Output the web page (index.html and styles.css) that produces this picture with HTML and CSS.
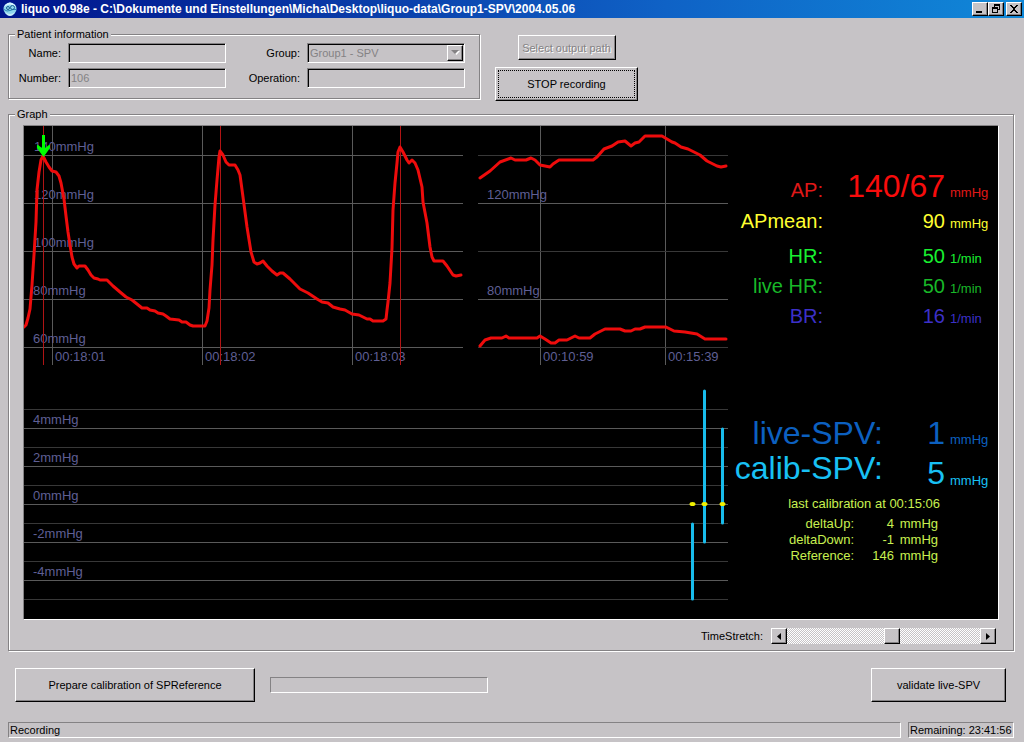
FILE: index.html
```html
<!DOCTYPE html>
<html lang="en">
<head>
<meta charset="utf-8">
<title>liquo v0.98e</title>
<link rel="stylesheet" href="styles.css">
</head>
<body class="window">
<header class="titlebar">
  <svg class="app-icon" width="16" height="16" viewBox="0 0 16 16" aria-hidden="true">
    <circle cx="8" cy="8" r="6.5" fill="#8fd6ee"/>
    <path d="M2 6Q8 1 14 6L13 4Q8-1 3 4Z" fill="#d8f4ff"/>
    <path d="M3 11Q8 15 13 11L11 14Q8 16 5 14Z" fill="#c8ecfa"/>
    <path d="M2 8.500Q5 11 8 9.500T14 8.500" fill="none" stroke="#2b86b4"/>
    <circle cx="6" cy="7" r="1.500" fill="none" stroke="#1c5f94"/>
    <circle cx="10.500" cy="6.500" r="2" fill="none" stroke="#1c5f94"/>
  </svg>
  <h1 class="title">liquo v0.98e - C:\Dokumente und Einstellungen\Micha\Desktop\liquo-data\Group1-SPV\2004.05.06</h1>
  <div class="window-buttons">
    <button class="win-btn" type="button" aria-label="Minimize"><svg width="12" height="10" viewBox="0 0 12 10" shape-rendering="crispEdges"><path d="M2 7h6v2H2z"/></svg></button>
    <button class="win-btn" type="button" aria-label="Restore"><svg width="12" height="10" viewBox="0 0 12 10" shape-rendering="crispEdges"><path d="M4 0h6v6H8V5h1V2H5v1H4zM2 3h6v6H2zM3 5v3h4V5z" fill-rule="evenodd"/></svg></button>
    <button class="win-btn close" type="button" aria-label="Close"><svg width="12" height="10" viewBox="0 0 12 10" shape-rendering="crispEdges"><path d="M2 1h2v1h1v1h2V2h1V1h2v1H9v1H8v1H7v2h1v1h1v1h1v1H8V8H7V7H5v1H4v1H2V8h1V7h1V6h1V4H4V3H3V2H2z"/></svg></button>
  </div>
</header>

<main class="content">
  <div class="top">
    <fieldset class="group patient">
      <legend>Patient information</legend>
      <div class="fields">
        <label for="name">Name:</label>
        <input class="field" id="name" type="text" disabled>
        <label for="group">Group:</label>
        <div class="combo">
          <select class="field" id="group" disabled><option>Group1 - SPV</option></select>
          <span class="combo-arrow"><svg width="9" height="6" viewBox="0 0 9 6"><path d="M2 1h7L5.500 5z" fill="#fff"/><path d="M0 0h8L4 4z" fill="#848284"/></svg></span>
        </div>
        <label for="number">Number:</label>
        <input class="field" id="number" type="text" value="106" disabled>
        <label for="operation">Operation:</label>
        <input class="field" id="operation" type="text" disabled>
      </div>
    </fieldset>
    <div class="actions">
      <button class="btn select-path" type="button" disabled>Select output path</button>
      <button class="btn stop" type="button">STOP recording</button>
    </div>
  </div>

  <fieldset class="group graph">
    <legend>Graph</legend>
    <div class="monitor">
      <svg class="plots" viewBox="24 126 704 493" role="img" aria-label="Pressure curves">
        <g class="grid">
          <path d="M24 155.500H463M24 203.500H463M24 251.500H463M24 299.500H463M24 347.500H463"/>
          <path d="M52.500 126V365M202.500 126V365M352.500 126V365M540.500 126V365M665.500 126V365"/>
          <path d="M478 203.500H728M478 299.500H728"/>
          <path d="M24 428.500H728M24 466.500H728M24 504.500H728M24 542.500H728M24 580.500H728"/>
          <path class="minor" d="M478 155.500H728M478 251.500H728M478 347.500H728"/>
          <path class="minor" d="M24 409.500H728M24 447.500H728M24 485.500H728M24 523.500H728M24 561.500H728M24 599.500H728"/>
        </g>
        <g class="axis">
          <text x="34" y="151">140mmHg</text>
          <text x="34" y="199">120mmHg</text>
          <text x="34" y="247">100mmHg</text>
          <text x="33" y="295">80mmHg</text>
          <text x="33" y="343">60mmHg</text>
          <text x="55" y="361">00:18:01</text>
          <text x="205" y="361">00:18:02</text>
          <text x="355" y="361">00:18:03</text>
          <text x="487" y="199">120mmHg</text>
          <text x="487" y="295">80mmHg</text>
          <text x="543" y="361">00:10:59</text>
          <text x="668" y="361">00:15:39</text>
          <text x="33" y="424">4mmHg</text>
          <text x="33" y="462">2mmHg</text>
          <text x="33" y="500">0mmHg</text>
          <text x="33" y="538">-2mmHg</text>
          <text x="33" y="576">-4mmHg</text>
        </g>
        <g class="beat">
          <rect x="43" y="126" width="1" height="239"/>
          <rect x="220" y="126" width="1" height="239"/>
          <rect x="400" y="126" width="1" height="239"/>
        </g>
        <polyline class="trace" points="24,327 26,325 28,318 30,309 32,285 34,255 36,222 37,190 39,172 41,160 43,156 46,162 49,167 52,171 56,172 59,176 61,183 64,199 66,216 68,232 70,245 72,257 74,264 77,268 79,266 85,266 88,270 91,275 94,278 98,279 100,280 107,280 113,286 120,292 126,297 132,300 137,304 142,308 147,308 150,310 155,311 158,313 163,314 166,316 170,319 179,320 182,322 186,322 190,325 193,326 205,326 207,321 209,308 210,290 212,265 213,240 215,205 217,180 219,157 220,151 223,155 226,162 229,165 235,165 238,170 240,175 243,197 247,227 251,252 254,262 257,264 260,263 263,261 267,266 272,271 277,275 280,273 283,273 290,279 300,289 308,293 317,299 322,302 328,303 333,307 340,309 345,310 352,314 359,315 367,319 370,319 373,321 383,321 386,319 387,310 388,302 390,283 392,248 393,210 395,183 397,163 398,152 400,147 403,152 407,160 409,163 412,160 415,163 418,170 422,187 423,202 427,223 430,247 432,257 434,261 443,261 447,266 453,275 456,276 461,275"/>
        <polyline class="trace" points="480,178 490,171 500,162 511,158 515,160 526,160 531,158 535,160 540,165 550,167 553,164 559,160 593,160 597,157 604,149 612,146 618,142 625,141 631,146 635,143 639,142 645,136 662,136 667,139 672,142 675,143 681,147 688,149 700,155 707,161 717,166 721,167 726,166"/>
        <polyline class="trace" points="480,346 485,340 491,338 502,338 506,336 509,338 537,338 540,336 545,339 551,343 555,343 559,340 567,340 575,336 579,338 590,338 595,334 605,329 620,329 625,331 631,331 635,329 640,329 645,327 666,327 674,331 685,332 697,334 705,339 726,339"/>
        <path class="marker" d="M42 135h3v13l4-3h1v3l-6.500 9-6.500-9v-3h1l4 3z"/>
        <path class="range-bars" d="M692.500 524V599M704.500 391V542M722.500 429V523"/>
        <g class="points"><ellipse cx="692.500" cy="504" rx="3" ry="2"/><ellipse cx="704.500" cy="504" rx="3" ry="2"/><ellipse cx="722.500" cy="504" rx="3" ry="2"/></g>
      </svg>
      <div class="readouts">
        <dl class="vitals">
          <div class="row ap"><dt>AP:</dt><dd class="value large">140/67</dd><dd class="unit">mmHg</dd></div>
          <div class="row apmean"><dt>APmean:</dt><dd class="value">90</dd><dd class="unit">mmHg</dd></div>
          <div class="row hr"><dt>HR:</dt><dd class="value">50</dd><dd class="unit">1/min</dd></div>
          <div class="row live-hr"><dt>live HR:</dt><dd class="value">50</dd><dd class="unit">1/min</dd></div>
          <div class="row br"><dt>BR:</dt><dd class="value">16</dd><dd class="unit">1/min</dd></div>
        </dl>
        <dl class="spv">
          <div class="row live-spv"><dt>live-SPV:</dt><dd class="value large">1</dd><dd class="unit">mmHg</dd></div>
          <div class="row calib-spv"><dt>calib-SPV:</dt><dd class="value large">5</dd><dd class="unit">mmHg</dd></div>
        </dl>
        <p class="calibrated">last calibration at 00:15:06</p>
        <table class="calibration">
          <tr><th scope="row">deltaUp:</th><td>4</td><td class="cal-unit">mmHg</td></tr>
          <tr><th scope="row">deltaDown:</th><td>-1</td><td class="cal-unit">mmHg</td></tr>
          <tr><th scope="row">Reference:</th><td>146</td><td class="cal-unit">mmHg</td></tr>
        </table>
      </div>
    </div>
    <div class="stretch">
      <label for="stretch">TimeStretch:</label>
      <div class="scrollbar">
        <button class="scroll-btn" type="button" aria-label="Decrease"><svg width="4" height="7" viewBox="0 0 4 7"><path d="M4 0v7L0 3.500z"/></svg></button>
        <input class="scroll-range" id="stretch" type="range" min="0" max="100" value="55">
        <button class="scroll-btn" type="button" aria-label="Increase"><svg width="4" height="7" viewBox="0 0 4 7"><path d="M0 0v7l4-3.500z"/></svg></button>
      </div>
    </div>
  </fieldset>

  <div class="bottom">
    <button class="btn prepare" type="button">Prepare calibration of SPReference</button>
    <div class="progress" role="progressbar" aria-label="Calibration progress" aria-valuenow="0"></div>
    <button class="btn validate" type="button">validate live-SPV</button>
  </div>
</main>

<footer class="statusbar">
  <div class="status-main">Recording</div>
  <div class="status-time">Remaining: 23:41:56</div>
</footer>
</body>
</html>
```
FILE: styles.css
```css
* { box-sizing: border-box; }

.window {
  --face: #c6c3c6;
  --shade: #848284;
  margin: 0;
  min-height: 100vh;
  display: flex;
  flex-direction: column;
  background: var(--face);
  color: #000;
  font: 11px/16px "Liberation Sans", Arial, sans-serif;
}

button, input, select { font: inherit; color: inherit; margin: 0; border-radius: 0; }

.titlebar {
  display: flex;
  align-items: center;
  height: 18px;
  padding: 0 2px;
  gap: 3px;
  background: linear-gradient(90deg, #00148c, #0a3ca8 35%, #0f62c6 65%, #1088d8);
  color: #fff;
}
.app-icon { flex: none; }
.title {
  flex: 1;
  min-width: 0;
  margin: 0;
  overflow: hidden;
  white-space: nowrap;
  font-size: 12px;
  line-height: 18px;
  font-weight: bold;
}
.window-buttons { display: flex; }
.win-btn, .scroll-btn, .combo-arrow {
  display: flex;
  align-items: center;
  justify-content: center;
  padding: 0;
  width: 16px;
  background: var(--face);
  border: 1px solid;
  border-color: #fff #000 #000 #fff;
  box-shadow: inset -1px -1px 0 var(--shade);
  color: #000;
}
.win-btn { height: 14px; }
.close { margin-left: 2px; }

.content { padding: 9px 10px 0 8px; }

.top { display: flex; gap: 15px; }
.group {
  min-width: 0;
  margin: 0;
  border: 1px solid var(--shade);
  box-shadow: inset 1px 1px 0 #fff, 1px 1px 0 #fff;
}
.group legend { margin: 0; padding: 0 2px; background: var(--face); line-height: 14px; }
.patient { flex: 0 1 472px; height: 72px; padding: 2px 14px 0 6px; }
.fields {
  display: grid;
  grid-template-columns: 46px 158px 1fr 158px;
  gap: 5px 7px;
  align-items: center;
}
.fields label { text-align: right; }
.field {
  display: block;
  width: 100%;
  height: 20px;
  padding: 0 2px;
  background: var(--face);
  border: 1px solid;
  border-color: var(--shade) #fff #fff var(--shade);
  box-shadow: inset 1px 1px 0 #000;
  color: var(--shade);
  opacity: 1;
}
.combo { position: relative; height: 20px; }
.combo select { appearance: none; }
.combo-arrow { position: absolute; right: 2px; top: 2px; height: 16px; }

.actions { display: flex; flex-direction: column; align-items: center; gap: 7px; padding-top: 8px; }
.btn {
  height: 34px;
  padding: 0 8px;
  background: var(--face);
  border: 1px solid;
  border-color: #fff #000 #000 #fff;
  box-shadow: inset -1px -1px 0 var(--shade);
  white-space: nowrap;
}
.select-path { width: 98px; height: 25px; padding: 0; color: var(--shade); text-shadow: 1px 1px 0 #fff; }
.stop { width: 143px; outline: 1px dotted #000; outline-offset: -4px; }

.graph { margin-top: 6px; padding: 4px 14px 6px; }
.graph legend { margin-left: -8px; }
.monitor {
  display: grid;
  grid-template-columns: minmax(0, 1fr) 270px;
  background: #000;
  border: 1px solid;
  border-color: var(--shade) #fff #fff var(--shade);
}
.plots { display: block; width: 100%; height: auto; }
.grid { fill: none; stroke: #5a5a5a; shape-rendering: crispEdges; }
.minor { stroke: #383838; }
.axis { fill: #5f5f94; font-size: 13px; }
.beat { fill: #b01414; }
.trace { fill: none; stroke: #ee0c0c; stroke-width: 3; stroke-linejoin: round; stroke-linecap: round; }
.marker { fill: #00ff00; }
.range-bars { stroke: #18bcec; stroke-width: 3; stroke-linecap: round; }
.points { fill: #f0f000; }

.readouts { padding-top: 45px; }
.vitals, .spv { margin: 0; }
.row {
  display: grid;
  grid-template-columns: 95px 1fr 53px;
  align-items: baseline;
  font-size: 20px;
  line-height: 20px;
}
.row dt, .value { text-align: right; white-space: nowrap; }
.row dd { margin: 0; }
.row .value { line-height: 30px; }
.row .large { font-size: 32px; }
.row .unit { padding-left: 5px; font-size: 13px; line-height: 16px; }
.ap { color: #e01818; }
.ap .large { color: #f80c0c; }
.apmean { margin: 5px 0; color: #ffff30; }
.hr { color: #18f030; }
.live-hr { color: #18b828; }
.br { color: #3c30c8; }

.spv { margin-top: 85px; }
.spv .row { grid-template-columns: 155px 1fr 53px; }
.spv dt { font-size: 32px; line-height: 35px; }
.spv .value { line-height: 35px; }
.live-spv { color: #0c60c0; }
.calib-spv { color: #18c0f4; }
.spv .calib-spv { align-items: start; }
.calib-spv .value { padding-top: 5px; }
.calib-spv .unit { margin-top: 22px; }

.calibrated, .calibration { color: #c8f050; font-size: 13px; line-height: 16px; }
.calibrated { margin: 5px 58px 4px 0; text-align: right; }
.calibration { margin-left: 56px; border-collapse: collapse; text-align: right; }
.calibration th { width: 70px; padding: 0; font-weight: normal; text-align: right; }
.calibration td { width: 40px; padding: 0; }
.calibration .cal-unit { width: 44px; text-align: right; }

.stretch { display: flex; justify-content: flex-end; align-items: center; gap: 8px; margin: 8px 3px 0 0; }
.scrollbar { display: flex; width: 225px; height: 16px; }
.scroll-range {
  appearance: none;
  flex: 1;
  min-width: 0;
  height: 16px;
  background: repeating-conic-gradient(#fff 0 25%, var(--face) 0 50%) 0 0 / 2px 2px;
}
.scroll-range::-webkit-slider-thumb {
  appearance: none;
  width: 16px;
  height: 16px;
  background: var(--face);
  border: 1px solid;
  border-color: #fff #000 #000 #fff;
  box-shadow: inset -1px -1px 0 var(--shade);
}

.bottom { display: flex; align-items: center; gap: 15px; padding: 17px 8px 0 7px; }
.prepare { width: 240px; }
.progress {
  width: 218px;
  height: 16px;
  border: 1px solid;
  border-color: var(--shade) #fff #fff var(--shade);
}
.validate { width: 135px; margin-left: auto; }

.statusbar { display: flex; gap: 7px; margin-top: auto; padding: 0 10px 4px 8px; }
.status-main, .status-time {
  height: 16px;
  padding: 0 1px;
  border: 1px solid;
  border-color: var(--shade) #fff #fff var(--shade);
  line-height: 15px;
  white-space: nowrap;
}
.status-main { flex: 1; }
.status-time { flex: none; min-width: 106px; }
```
